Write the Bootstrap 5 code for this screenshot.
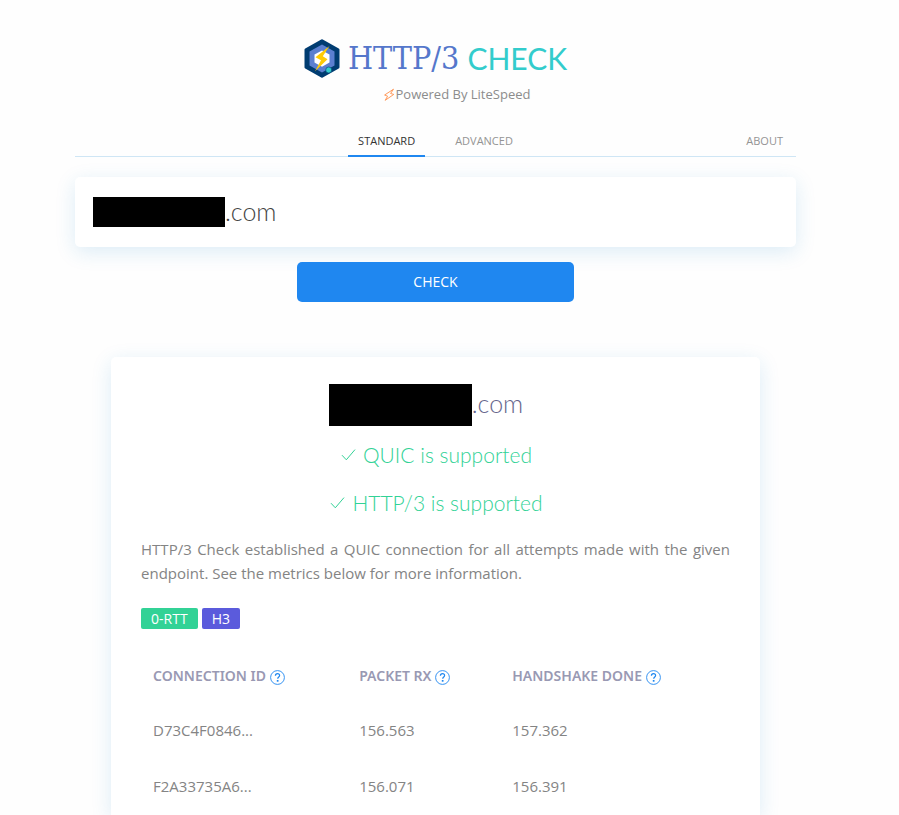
<!DOCTYPE html>
<html lang="en">
<head>
<meta charset="utf-8">
<meta name="viewport" content="width=device-width, initial-scale=1">
<title>HTTP/3 Check</title>
<link href="https://cdn.jsdelivr.net/npm/bootstrap@5.3.0/dist/css/bootstrap.min.css" rel="stylesheet">
<style>
  body { font-family: "Open Sans", "Noto Sans", sans-serif; background: #fefefe; color: #848484; padding-right: 28px; }
  a { text-decoration: none; }
  .page { max-width: 721px; }
  .page-head { padding-top: 39px; }
  .brand { height: 39px; gap: 8px; line-height: 39px; }
  .brand-slab { font-family: "DejaVu Serif Condensed", "DejaVu Serif", serif; font-size: 32px; color: #5577cb; }
  .brand-sans { font-family: Lato, sans-serif; font-size: 30px; color: #33cccc; }
  .powered { font-size: 13px; line-height: 20px; color: #8c8c8c; margin-top: 6px; padding-left: 42px; }
  .tabs { display: grid; grid-template-columns: 1fr auto 1fr; margin-top: 21px; border-bottom: 1px solid #cfe6f5; font-size: 11px; line-height: 16px; }
  .tab-group { gap: 20px; }
  .tabs a { color: #949494; padding: 8px 10px 6px; margin-bottom: -1px; border-bottom: 2px solid transparent; }
  .tabs a.active { color: #333; border-color: #1f87f0; }
  .tabs .about { padding-right: 13px; }
  .panel { background: #fff; border-radius: 5px; box-shadow: 0 5px 20px rgba(30, 135, 200, .15); }
  .search { margin-top: 20px; padding: 0 18px; height: 70px; }
  .search input { font-family: Lato, sans-serif; font-weight: 300; font-size: 25px; color: #444; outline: 0; min-width: 0; background: none; }
  .redact { background: #000; flex: none; }
  .redact-sm { width: 132px; height: 30px; }
  .redact-lg { width: 143px; height: 42px; }
  .btn-check-host { --bs-btn-bg: #1f87f0; --bs-btn-color: #fff; --bs-btn-hover-bg: #1674d4; --bs-btn-hover-color: #fff; width: 277px; height: 40px; margin-top: 15px; padding: 0; font-size: 14px; line-height: 20px; border: 0; border-radius: 5px; }
  .results { width: 90%; margin-top: 55px; padding: 27px 30px 0; border-radius: 5px 5px 0 0; }
  .host { font-family: Lato, sans-serif; font-weight: 300; font-size: 25px; line-height: 38px; color: #66668c; padding-right: 19px; }
  .status { font-family: Lato, sans-serif; font-weight: 300; font-size: 21px; line-height: 24px; color: #32d296; gap: 7px; padding-left: 2px; }
  .status-list { display: grid; gap: 24px; margin-top: 17px; }
  .summary { font-size: 15px; line-height: 24px; text-align: justify; margin: 22px 0 23px; }
  .tag { font-size: 14px; line-height: 21px; padding: 0 10px; color: #fff; border-radius: 2px; }
  .tag-green { background: #32d296; }
  .tag-violet { background: #5b5bdc; }
  .metrics { --bs-table-bg: transparent; --bs-table-color: #848484; margin: 19px 0 0; table-layout: fixed; }
  .metrics th, .metrics td { border: 0; padding: 16px 12px; line-height: 24px; font-size: 15px; white-space: nowrap; }
  .metrics th { font-family: "Noto Sans", sans-serif; font-size: 14px; font-weight: 600; color: #9999b3; padding-bottom: 14px; }
  .metrics .c1 { width: 35%; } .metrics .c2 { width: 26%; }
  .help { border: 0; background: none; padding: 0; display: inline-flex; vertical-align: middle; color: #1f87f0; }
</style>
<script src="https://cdn.jsdelivr.net/npm/bootstrap@5.3.0/dist/js/bootstrap.bundle.min.js" defer></script>
</head>
<body>
<svg class="d-none" aria-hidden="true">
  <symbol id="i-help" viewBox="0 0 15 15"><circle cx="7.5" cy="7.5" r="6.9" fill="none" stroke="currentColor" stroke-width=".9"/><path d="M5.4 5.8C5.4 4.3 6.3 3.6 7.5 3.6s2.1.8 2.1 1.9c0 1.4-1.9 1.5-1.9 3.2" fill="none" stroke="currentColor" stroke-width="1.2"/><rect x="6.8" y="10" width="1.7" height="1.7" fill="currentColor"/></symbol>
  <symbol id="i-tick" viewBox="0 0 15 14"><path d="M1 7.2 5.3 11.8 14 1.6" fill="none" stroke="currentColor" stroke-width="1"/></symbol>
</svg>
<div class="page mx-auto min-vh-100 d-flex flex-column">
  <header class="page-head">
    <a href="#" class="brand d-flex justify-content-center align-items-center">
      <svg width="36" height="39" viewBox="0 0 36 39" aria-hidden="true">
        <path d="M18 1.8 34 10.8V28.2L18 37.2 2 28.2V10.8Z" fill="#003c71" stroke="#003c71" stroke-width="3" stroke-linejoin="round"/>
        <path d="M18 5.5 30.5 12.5V26.5L18 33.5 5.5 26.5V12.5Z" fill="#5b7fd0"/>
        <path d="M18 11.5 25.5 15.6V23.4L18 27.8 10.5 23.4V15.6Z" fill="#fff"/>
        <path d="M25.5 7 11.5 18.3 17 21.3 11 32.2 23.5 20.3 18.8 17.2Z" fill="#ffcb05"/>
        <circle cx="24.7" cy="31" r="3" fill="#33cccc" stroke="#003c71" stroke-width=".6"/>
      </svg>
      <span class="brand-slab">HTTP/3</span><span class="brand-sans">CHECK</span>
    </a>
    <div class="powered d-flex justify-content-center align-items-center">
      <svg width="13" height="14" viewBox="0 0 13 14" aria-hidden="true"><path d="M10.5 2.2 1.6 8 4.6 9.2 2.2 13.3 10.8 7.4 7.6 6.5Z" fill="none" stroke="#ff9a5c" stroke-width="1" stroke-linejoin="round"/></svg>
      <span>Powered By LiteSpeed</span>
    </div>
    <nav class="tabs">
      <span></span>
      <div class="tab-group d-flex">
        <a href="#" class="active" aria-current="page">STANDARD</a>
        <a href="#">ADVANCED</a>
      </div>
      <a href="#" class="about text-end">ABOUT</a>
    </nav>
  </header>
  <form class="text-center">
    <div class="panel search d-flex align-items-center">
      <span class="redact redact-sm"></span>
      <input type="text" class="border-0 p-0 flex-grow-1" value=".com" aria-label="Host to check">
    </div>
    <button type="button" class="btn btn-check-host">CHECK</button>
  </form>
  <main class="panel results mx-auto flex-grow-1">
    <h1 class="host d-flex justify-content-center align-items-start m-0"><span class="redact redact-lg"></span>.com</h1>
    <div class="status-list">
      <div class="status d-flex justify-content-center align-items-center"><svg width="15" height="14"><use href="#i-tick"/></svg>QUIC is supported</div>
      <div class="status d-flex justify-content-center align-items-center"><svg width="15" height="14"><use href="#i-tick"/></svg>HTTP/3 is supported</div>
    </div>
    <p class="summary">HTTP/3 Check established a QUIC connection for all attempts made with the given endpoint. See the metrics below for more information.</p>
    <div class="d-flex gap-1"><span class="tag tag-green">0-RTT</span><span class="tag tag-violet">H3</span></div>
    <table class="table metrics">
      <thead><tr>
        <th scope="col" class="c1">CONNECTION ID <button type="button" class="help" aria-label="About connection ID"><svg width="15" height="15"><use href="#i-help"/></svg></button></th>
        <th scope="col" class="c2">PACKET RX <button type="button" class="help" aria-label="About packet RX"><svg width="15" height="15"><use href="#i-help"/></svg></button></th>
        <th scope="col">HANDSHAKE DONE <button type="button" class="help" aria-label="About handshake done"><svg width="15" height="15"><use href="#i-help"/></svg></button></th>
      </tr></thead>
      <tbody>
        <tr><td>D73C4F0846...</td><td>156.563</td><td>157.362</td></tr>
        <tr><td>F2A33735A6...</td><td>156.071</td><td>156.391</td></tr>
      </tbody>
    </table>
  </main>
</div>
</body>
</html>
